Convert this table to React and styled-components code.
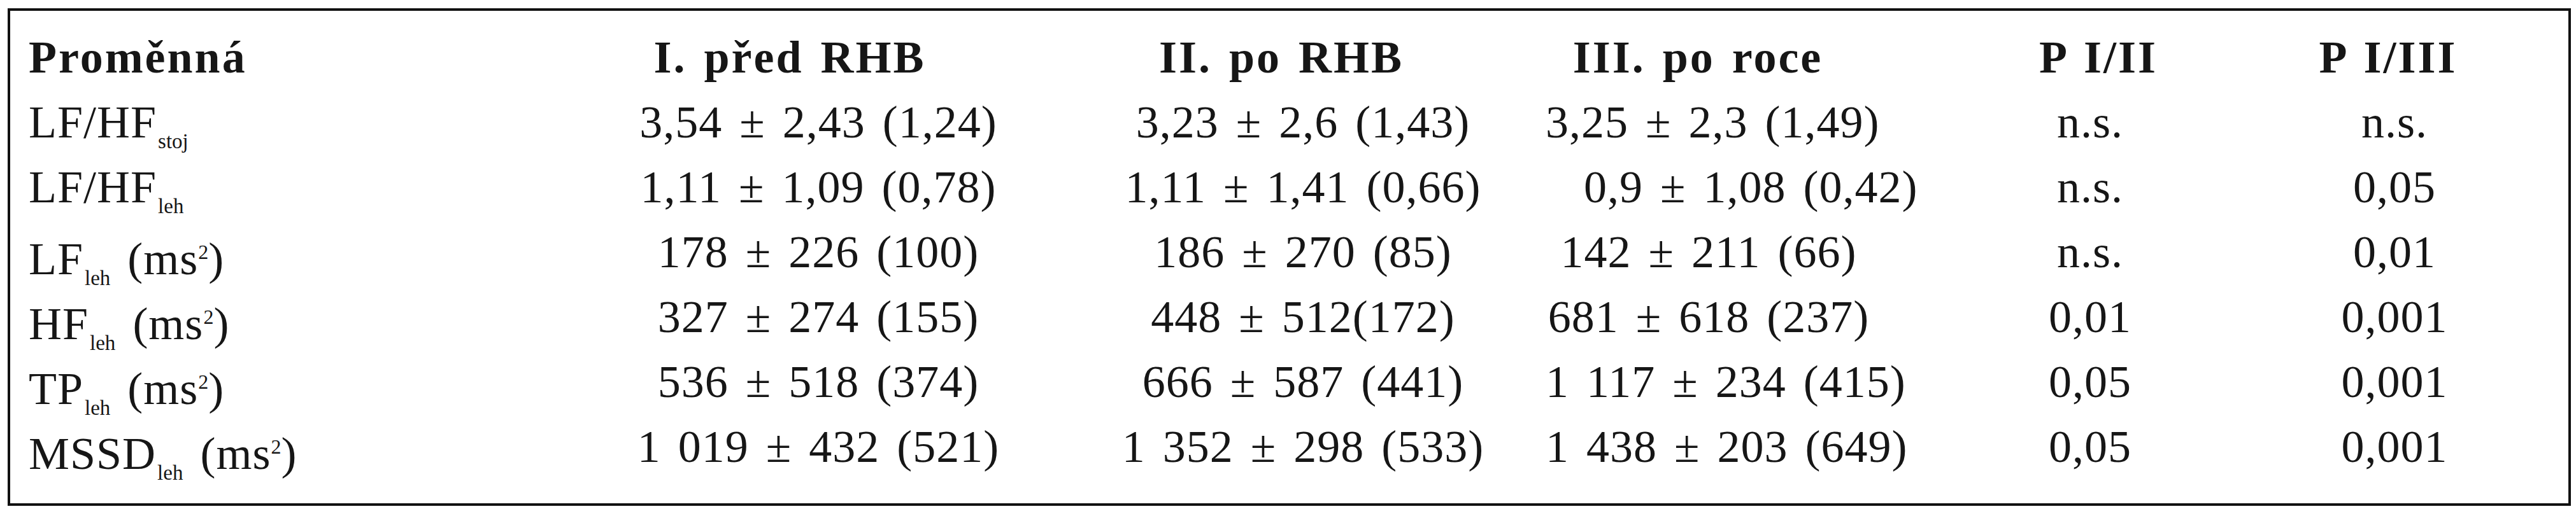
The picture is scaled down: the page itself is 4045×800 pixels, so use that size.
import styled, { createGlobalStyle } from "styled-components";

const GlobalStyle = createGlobalStyle`
    html, body {
        margin: 0;
        padding: 0;
        background: #fff;
    }
    body {
        font-family: "Liberation Serif", "Times New Roman", serif;
        color: #161616;
    }
`

const Page = styled.div`
    width: 4045px;
    height: 800px;
    padding: 13px 0 0 12px;
    box-sizing: border-box;
`

const Frame = styled.div`
    width: 4025px;
    height: 782px;
    box-sizing: border-box;
    border: 4px solid #111;
    padding: 22px 0 0 29px;
    display: flex;
    flex-direction: column;
`

const Row = styled.div`
    display: grid;
    grid-template-columns: 860px 760px 762px 512px 686px 270px;
    height: 102px;
    line-height: 102px;
    font-size: 72px;
    font-weight: ${props => props.$head ? 700 : 400};
    letter-spacing: ${props => props.$head ? 3 : 1}px;
    word-spacing: ${props => props.$head ? 6 : 8}px;
    white-space: nowrap;
`

const NameCell = styled.div`
    text-align: left;
`

const ValueCell = styled.div`
    text-align: center;
    padding-left: ${props => props.$shift > 0 ? props.$shift * 2 : 0}px;
    padding-right: ${props => props.$shift < 0 ? -props.$shift * 2 : 0}px;
    overflow: visible;
`

const Sub = styled.span`
    font-size: 33px;
    letter-spacing: 0;
    vertical-align: -17px;
    margin-left: 2px;
`

const Sup = styled.span`
    font-size: 32px;
    letter-spacing: 0;
    vertical-align: 24px;
`

const headers = [
    { label: "I. před RHB", shift: -45 },
    { label: "II. po RHB", shift: -34 },
    { label: "III. po roce", shift: -17 },
    { label: "P I/II", shift: 13 },
    { label: "P I/III", shift: -10 },
]

const rows = [
    {
        name: "LF/HF", sub: "stoj", unit: false,
        values: ["3,54 ± 2,43 (1,24)", "3,23 ± 2,6 (1,43)", "3,25 ± 2,3 (1,49)", "n.s.", "n.s."],
    },
    {
        name: "LF/HF", sub: "leh", unit: false,
        values: ["1,11 ± 1,09 (0,78)", "1,11 ± 1,41 (0,66)", "0,9 ± 1,08 (0,42)", "n.s.", "0,05"],
        shifts: [0, 0, 60, 0, 0],
    },
    {
        name: "LF", sub: "leh", unit: true,
        values: ["178 ± 226 (100)", "186 ± 270 (85)", "142 ± 211 (66)", "n.s.", "0,01"],
    },
    {
        name: "HF", sub: "leh", unit: true,
        values: ["327 ± 274 (155)", "448 ± 512(172)", "681 ± 618 (237)", "0,01", "0,001"],
    },
    {
        name: "TP", sub: "leh", unit: true,
        values: ["536 ± 518 (374)", "666 ± 587 (441)", "1 117 ± 234 (415)", "0,05", "0,001"],
    },
    {
        name: "MSSD", sub: "leh", unit: true,
        values: ["1 019 ± 432 (521)", "1 352 ± 298 (533)", "1 438 ± 203 (649)", "0,05", "0,001"],
    },
]

const App = () => {
    return (
        <>
            <GlobalStyle />
            <Page>
                <Frame>
                    <Row $head>
                        <NameCell>Proměnná</NameCell>
                        {headers.map(h => (
                            <ValueCell key={h.label} $shift={h.shift}>{h.label}</ValueCell>
                        ))}
                    </Row>
                    {rows.map((r, i) => (
                        <Row key={i}>
                            <NameCell>
                                {r.name}<Sub>{r.sub}</Sub>
                                {r.unit ? <> (ms<Sup>2</Sup>)</> : null}
                            </NameCell>
                            {r.values.map((v, j) => (
                                <ValueCell key={j} $shift={r.shifts ? r.shifts[j] / 2 : 0}>{v}</ValueCell>
                            ))}
                        </Row>
                    ))}
                </Frame>
            </Page>
        </>
    );
};

export default App;
